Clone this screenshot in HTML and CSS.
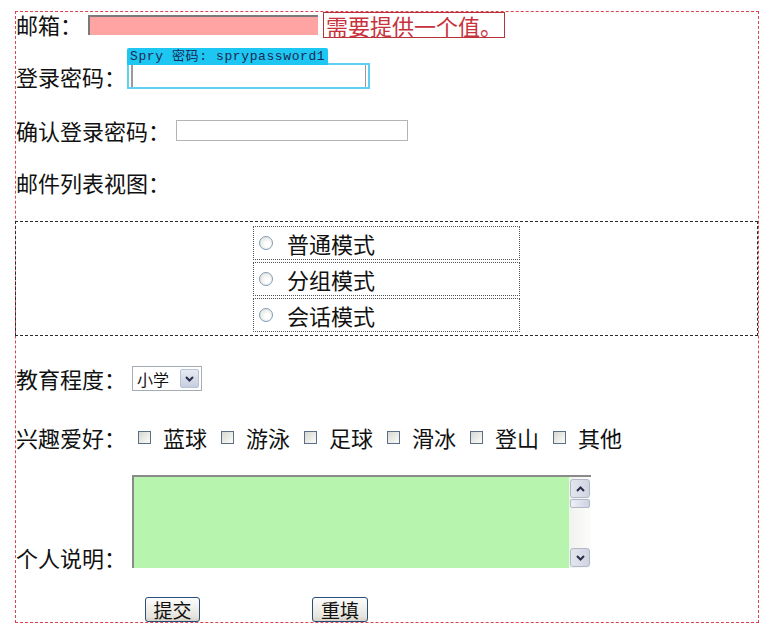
FILE: index.html
```html
<!DOCTYPE html>
<html lang="zh-CN">
<head>
    <meta charset="UTF-8">
    <title>用户注册</title>
    <link rel="stylesheet" href="styles.css">
</head>
<body>
    <form class="signup">
        <div class="row row-email">
            <span class="label">邮箱：</span>
            <input class="email" type="text">
            <span class="error">需要提供一个值。</span>
        </div>

        <div class="row row-pw">
            <span class="label">登录密码：</span>
            <span class="spry-field">
                <span class="spry-tag">Spry 密码: sprypassword1</span>
                <input class="pw" type="password">
            </span>
        </div>

        <div class="row row-confirm">
            <span class="label">确认登录密码：</span>
            <input class="confirm" type="password">
        </div>

        <div class="row row-view">
            <span class="label">邮件列表视图：</span>
        </div>

        <div class="view-box">
            <label class="view-opt"><input type="radio" name="view">普通模式</label>
            <label class="view-opt"><input type="radio" name="view">分组模式</label>
            <label class="view-opt"><input type="radio" name="view">会话模式</label>
        </div>

        <div class="row row-edu">
            <span class="label">教育程度：</span>
            <div class="select">
                <span class="select-value">小学</span>
                <span class="select-btn">
                    <svg width="9" height="6" viewBox="0 0 9 6"><polyline points="1,1 4.5,4.5 8,1" fill="none" stroke="#2b2b4a" stroke-width="2"/></svg>
                </span>
            </div>
        </div>

        <div class="row row-hobby">
            <span class="label">兴趣爱好：</span>
            <label class="check"><input type="checkbox">蓝球</label>
            <label class="check"><input type="checkbox">游泳</label>
            <label class="check"><input type="checkbox">足球</label>
            <label class="check"><input type="checkbox">滑冰</label>
            <label class="check"><input type="checkbox">登山</label>
            <label class="check"><input type="checkbox">其他</label>
        </div>

        <div class="row row-memo">
            <span class="label">个人说明：</span>
            <div class="memo">
                <textarea class="memo-text"></textarea>
                <div class="scrollbar">
                    <span class="sb-btn">
                        <svg width="9" height="6" viewBox="0 0 9 6"><polyline points="1,5 4.5,1.5 8,5" fill="none" stroke="#2b2b4a" stroke-width="2"/></svg>
                    </span>
                    <span class="sb-thumb"></span>
                    <span class="sb-track"></span>
                    <span class="sb-btn">
                        <svg width="9" height="6" viewBox="0 0 9 6"><polyline points="1,1 4.5,4.5 8,1" fill="none" stroke="#2b2b4a" stroke-width="2"/></svg>
                    </span>
                </div>
            </div>
        </div>

        <div class="row row-buttons">
            <button type="submit" class="btn">提交</button>
            <button type="reset" class="btn btn-reset">重填</button>
        </div>
    </form>
</body>
</html>
```

FILE: styles.css
```css
* {
    box-sizing: border-box;
}

body {
    margin: 0;
    background: #fff;
    color: #111;
    font-family: "Noto Sans CJK SC", "Noto Sans", sans-serif;
    font-size: 22px;
}

.signup {
    width: 744px;
    height: 612px;
    margin: 11px 0 0 15px;
    border: 1px dashed #d9434f;
}

.row {
    display: flex;
    align-items: center;
    height: 25px;
    line-height: 25px;
    white-space: nowrap;
}

.label {
    flex: none;
}

/* email + validation message */
.email {
    width: 230px;
    height: 20px;
    margin-left: 6px;
    background: #ffa3a3;
    border: none;
    border-top: 2px solid #7a7a7a;
    border-left: 2px solid #7a7a7a;
}

.error {
    height: 26px;
    margin-left: 5px;
    padding: 0 2px;
    line-height: 24px;
    color: #c8323c;
    border: 1px solid #b8323a;
}

/* password spry widget */
.row-pw {
    margin-top: 26px;
    height: 26px;
}

.spry-field {
    position: relative;
    display: flex;
    width: 243px;
    height: 26px;
    margin-left: 1px;
    padding: 0 2px;
    border: 2px solid #5fd0f0;
}

.spry-tag {
    position: absolute;
    left: -2px;
    bottom: 100%;
    height: 17px;
    padding: 0 3px;
    font-family: "Liberation Mono", "Noto Sans CJK SC", monospace;
    font-size: 13px;
    letter-spacing: 0.6px;
    line-height: 17px;
    color: #1b2a55;
    background: #1ec6f2;
    border-radius: 2px 2px 0 0;
}

.pw {
    flex: 1;
    height: 100%;
    border: none;
    border-left: 2px solid #9a9a9a;
    border-right: 1px solid #9a9a9a;
    background: #fff;
}

.row-confirm {
    margin-top: 29px;
}

.confirm {
    width: 232px;
    height: 21px;
    margin-left: 6px;
    border: 1px solid #b4b4b4;
}

.row-view {
    margin-top: 27px;
}

/* list view radios */
.view-box {
    display: flex;
    flex-direction: column;
    align-items: center;
    gap: 2px;
    height: 115px;
    margin: 26px 0 0 -1px;
    padding-top: 4px;
    border: 1px dashed #2a2a2a;
}

.view-opt {
    display: flex;
    align-items: center;
    width: 267px;
    height: 34px;
    padding-left: 5px;
    line-height: 34px;
    border: 1px dotted #555;
}

.view-opt input {
    appearance: none;
    width: 14px;
    height: 14px;
    margin: 0 14px 0 0;
    border: 1px solid #7f9db9;
    border-radius: 50%;
    background: radial-gradient(circle at 60% 60%, #fff 20%, #dcdcd6 90%);
}

/* education select */
.row-edu {
    margin-top: 30px;
}

.select {
    display: flex;
    align-items: center;
    width: 70px;
    height: 25px;
    margin-left: 6px;
    padding: 2px;
    border: 1px solid #a5acb2;
    background: #fff;
}

.select-value {
    flex: 1;
    padding-left: 2px;
    font-size: 16px;
    line-height: 20px;
}

.select-btn {
    display: flex;
    align-items: center;
    justify-content: center;
    width: 19px;
    height: 19px;
    border: 1px solid #b9c3d6;
    border-radius: 2px;
    background: linear-gradient(#e8ebf2, #c6cede);
}

/* hobbies */
.row-hobby {
    margin-top: 34px;
    height: 24px;
}

.check {
    display: flex;
    align-items: center;
    margin-left: 12px;
}

.check + .check {
    margin-left: 14px;
}

.check input {
    appearance: none;
    width: 13px;
    height: 13px;
    margin: 0 12px 0 0;
    border: 1px solid #5a6f86;
    background: linear-gradient(135deg, #d8d8d2, #fbfbf9);
}

/* personal description */
.row-memo {
    margin-top: 26px;
    height: 93px;
    align-items: flex-end;
}

.row-memo .label {
    line-height: 22px;
}

.memo {
    display: flex;
    width: 459px;
    height: 93px;
    margin-left: 6px;
    border-top: 2px solid #8a8a8a;
    border-left: 2px solid #8a8a8a;
}

.memo-text {
    flex: 1;
    border: none;
    resize: none;
    background: #b7f4ad;
}

.scrollbar {
    display: flex;
    flex-direction: column;
    width: 22px;
    padding: 2px 1px 1px;
    background: linear-gradient(90deg, #f1f1ee, #fcfcfb);
}

.sb-btn {
    display: flex;
    align-items: center;
    justify-content: center;
    height: 19px;
    border: 1px solid #b3b8c8;
    border-radius: 3px;
    background: linear-gradient(90deg, #e4e6ee, #d0d4e2);
}

.sb-thumb {
    height: 9px;
    margin-top: 1px;
    border: 1px solid #b3b8c8;
    border-radius: 2px;
    background: linear-gradient(90deg, #eef0f6, #cdd2e0);
}

.sb-track {
    flex: 1;
}

/* buttons */
.row-buttons {
    margin-top: 29px;
}

.btn {
    width: 55px;
    height: 25px;
    margin-left: 129px;
    padding: 0;
    font-family: inherit;
    font-size: 19px;
    line-height: 21px;
    color: #111;
    border: 1px solid #2a4f7a;
    border-radius: 3px;
    background: linear-gradient(#fdfdfc, #e6e4dc 80%, #d6d2c6);
}

.btn-reset {
    width: 56px;
    margin-left: 112px;
}
```
